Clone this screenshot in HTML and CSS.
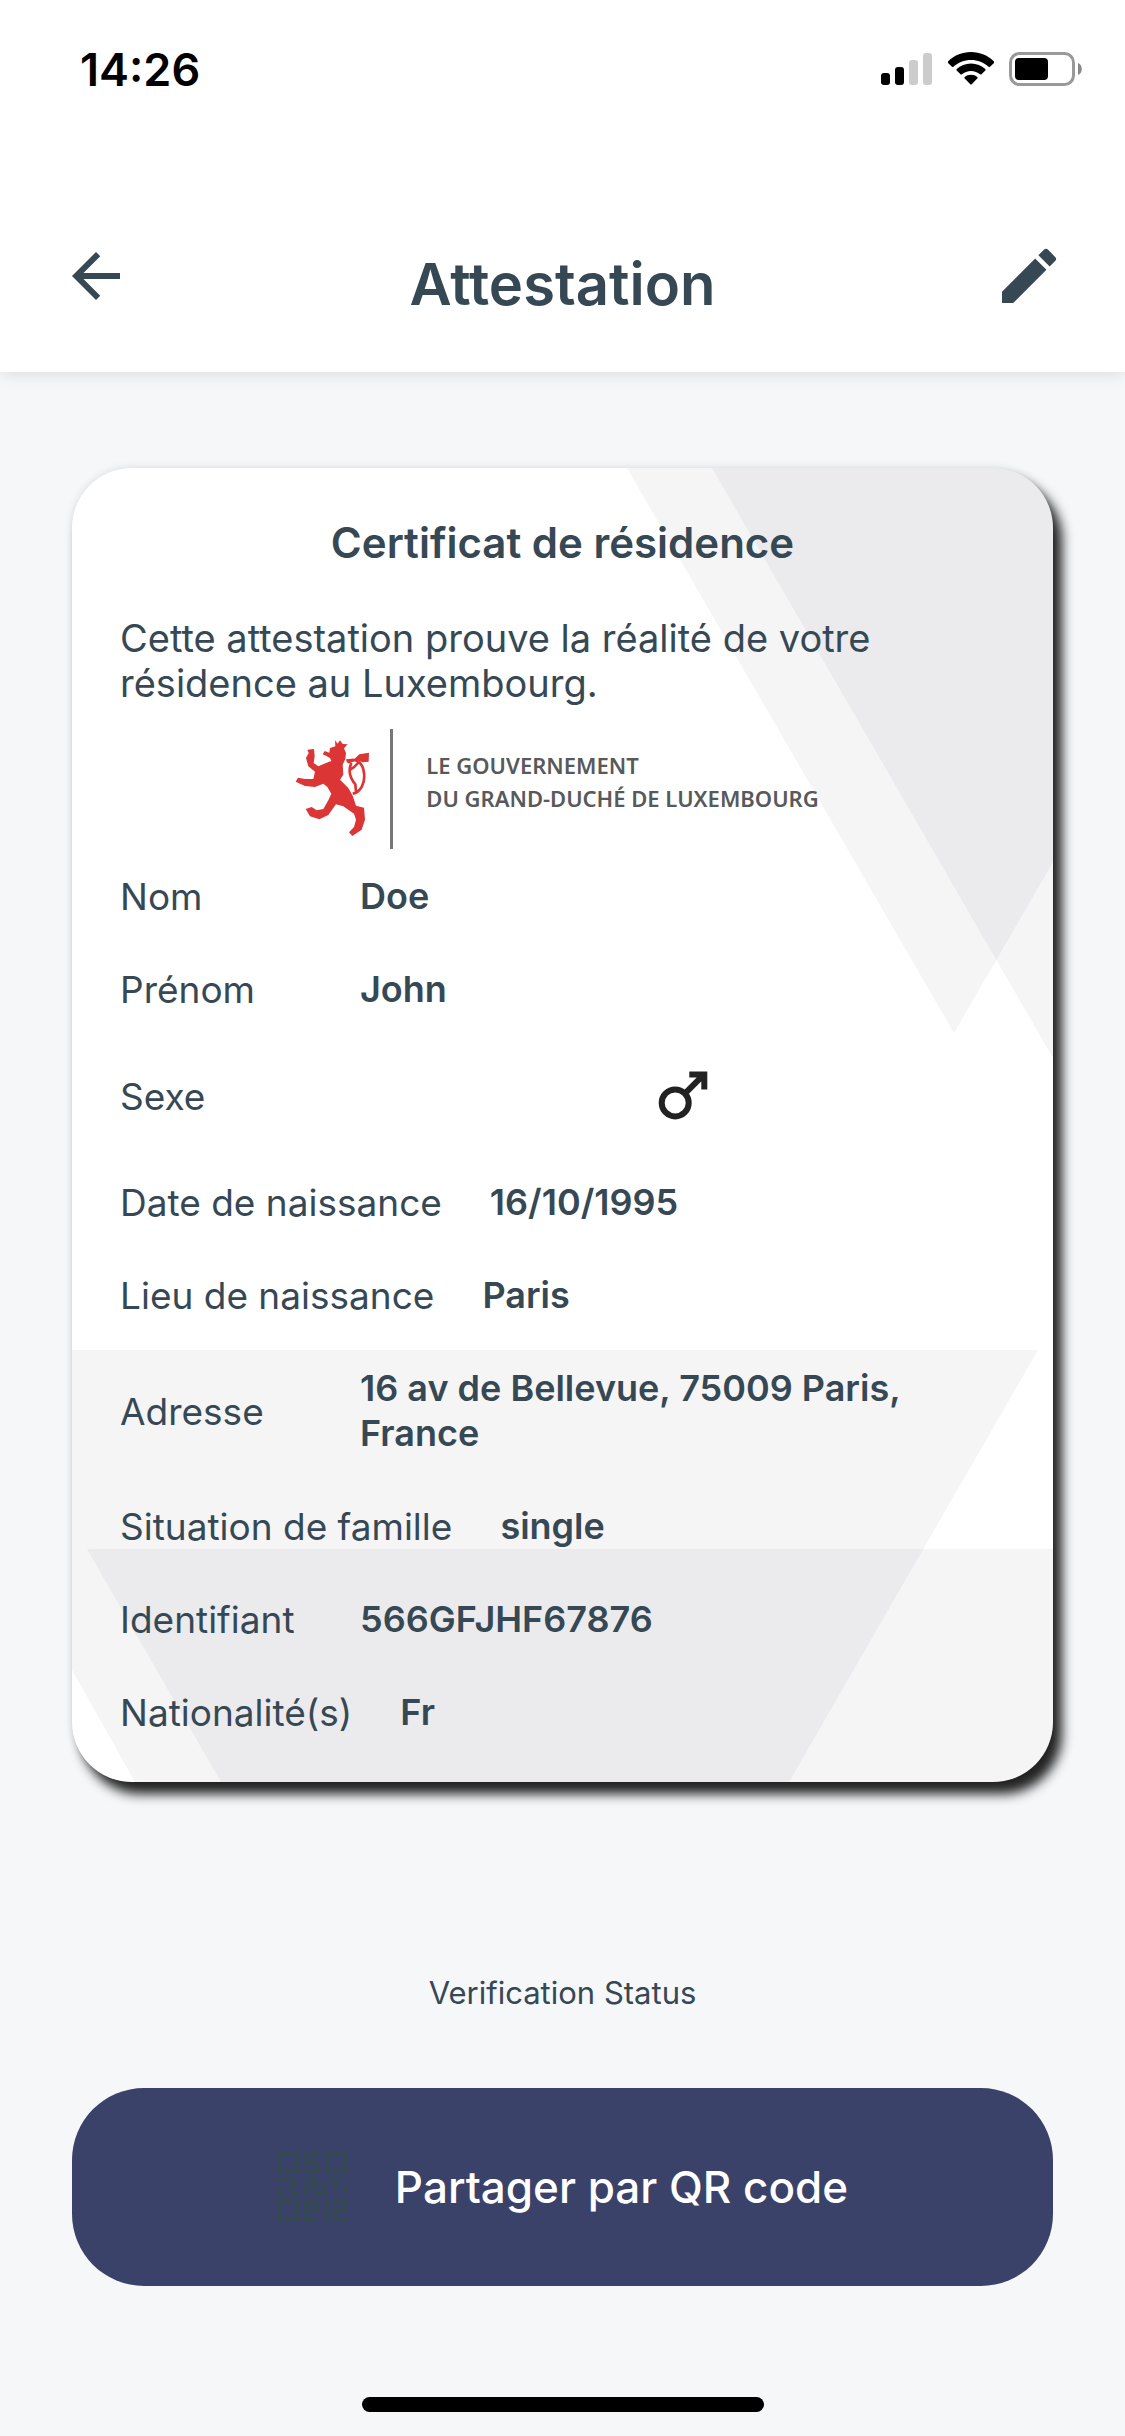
FILE: index.html
```html
<!DOCTYPE html>
<html lang="fr">
<head>
<meta charset="utf-8">
<meta name="viewport" content="width=device-width, initial-scale=1">
<title>Attestation</title>
<link rel="stylesheet" href="styles.css">
</head>
<body>
<div class="screen">
  <header class="topbar">
    <div class="status">
      <span class="clock">14:26</span>
      <div class="indicators">
        <svg width="52" height="33" viewBox="0 0 52 33" aria-hidden="true">
          <rect x="0" y="20" width="9" height="12" rx="3"/>
          <rect x="14" y="14" width="9" height="18" rx="3"/>
          <rect x="28" y="7" width="9" height="25" rx="3" fill="#ccc"/>
          <rect x="42" y="0" width="9" height="32" rx="3" fill="#ccc"/>
        </svg>
        <svg width="46" height="34" viewBox="0 0 46 34" aria-hidden="true">
          <path d="M23 0C14 0 6 3.500 0 9.500q-.6.700 0 1.400L4 14.800q.7.600 1.400 0C10 10.500 16.200 8 23 8s13 2.500 17.600 6.800q.7.600 1.400 0L46 10.900q.6-.7 0-1.400C40 3.500 32 0 23 0z"/>
          <path d="M23 11.500c-5.600 0-10.600 2.100-14.300 5.600q-.6.700 0 1.400L12.500 22.300q.7.600 1.400 0C16.300 20.300 19.500 19 23 19s6.700 1.300 9.100 3.300q.7.600 1.400 0L37.300 18.500q.6-.7 0-1.400C33.600 13.600 28.600 11.500 23 11.500z"/>
          <path d="M23 22.800c-2.500 0-4.600.8-6.300 2.300q-.7.700 0 1.400L22.300 32.300q.7.600 1.400 0L29.300 26.500q.7-.7 0-1.400C27.600 23.600 25.500 22.800 23 22.800z"/>
        </svg>
        <svg width="73" height="34" viewBox="0 0 73 34" aria-hidden="true">
          <rect x="1.500" y="1.500" width="63" height="31" rx="9" fill="none" stroke="#999" stroke-width="3"/>
          <rect x="6" y="6" width="33" height="22" rx="4"/>
          <path d="M69 11v12c5-1.500 5-10.500 0-12z" fill="#888"/>
        </svg>
      </div>
    </div>
    <nav class="nav">
      <button class="icon-button" type="button" aria-label="Retour">
        <svg viewBox="0 0 24 24" aria-hidden="true"><path d="M20 11H7.830l5.590-5.590L12 4l-8 8 8 8 1.410-1.410L7.830 13H20v-2z"/></svg>
      </button>
      <h1 class="title">Attestation</h1>
      <button class="icon-button" type="button" aria-label="Modifier">
        <svg viewBox="0 0 24 24" aria-hidden="true"><path d="M3 17.250V21h3.750L17.810 9.940l-3.750-3.750L3 17.250zM20.710 7.040a1 1 0 0 0 0-1.410l-2.340-2.340a1 1 0 0 0-1.410 0l-1.830 1.830 3.750 3.750 1.830-1.830z"/></svg>
      </button>
    </nav>
  </header>

  <main class="content">
    <section class="card">
      <svg class="card-art" viewBox="0 0 981 1314" preserveAspectRatio="none" aria-hidden="true">
        <path d="M555 0L882 565L981 394V0z"/>
        <path d="M640 0L981 590V0z"/>
        <path d="M0 882H966L717 1314H63L0 1202z"/>
        <path d="M15 1081H981V1314H149z"/>
      </svg>
      <h2 class="card-title">Certificat de résidence</h2>
      <p class="card-text">Cette attestation prouve la réalité de votre<br>résidence au Luxembourg.</p>
      <div class="issuer">
        <svg class="lion" viewBox="36 40 240 321" aria-hidden="true">
          <path d="M165 62L173 72L180 62L188 73L203 74L192 86L198 100L196 118L188 135L190 165L180 180L205 205L218 228L228 258L252 264L255 300L245 330L217 349L207 338L222 322L228 300L222 282L190 260L168 254L155 272L145 286L118 299L90 290L77 268L95 262L110 272L130 268L145 242L154 222L142 202L130 192L105 202L75 199L47 186L54 174L75 178L100 178L105 156L85 140L78 115L86 100L82 90L102 88L104 110L101 130L115 140L138 130L154 124L150 115L138 108L128 104L134 94L148 99L150 85L166 80z"/>
          <path d="M200 126C225 112 248 126 252 160C256 190 242 218 218 222M214 130C202 158 212 178 226 194L228 216M234 130C222 145 214 148 210 150" fill="none" stroke="#dc3535" stroke-width="8"/>
          <path d="M198 118L222 119L238 104L267 99L266 126L248 128L230 122L206 132z"/>
        </svg>
        <div class="issuer-name">LE GOUVERNEMENT<br>DU GRAND-DUCHÉ DE LUXEMBOURG</div>
      </div>
      <dl class="fields">
        <div class="field"><dt>Nom</dt><dd>Doe</dd></div>
        <div class="field"><dt>Prénom</dt><dd>John</dd></div>
        <div class="field"><dt>Sexe</dt><dd class="symbol">
          <svg viewBox="0 0 24 24" role="img" aria-label="Masculin"><circle cx="9.400" cy="14.300" r="4.500"/><path d="M12.600 11.200L18.600 5.200M14.100 4.800H19.100V9.800"/></svg>
        </dd></div>
        <div class="field"><dt>Date de naissance</dt><dd>16/10/1995</dd></div>
        <div class="field"><dt>Lieu de naissance</dt><dd>Paris</dd></div>
        <div class="field"><dt>Adresse</dt><dd>16 av de Bellevue, 75009 Paris,<br>France</dd></div>
        <div class="field"><dt>Situation de famille</dt><dd>single</dd></div>
        <div class="field"><dt>Identifiant</dt><dd>566GFJHF67876</dd></div>
        <div class="field"><dt>Nationalité(s)</dt><dd>Fr</dd></div>
      </dl>
    </section>
    <p class="verification">Verification Status</p>
    <button class="share" type="button">
      <svg class="qr" viewBox="0 0 70 70" aria-hidden="true">
        <path d="M2 2h18v18H2zM50 2h18v18H50zM2 50h18v18H2z"/>
        <path d="M44 2H35M28 0v11h13v9H26M35 2v9M0 28h18M20 30l-8 8M2 34v9h6M14 41h8M26 28h13v7H28v8M36 41h4M46 30v11M40 41h11M53 28h5v10M64 26v4M68 34v8M28 48v20h13M35 48v10h6V48M50 48v21M57 50h11v8H58v10h12"/>
      </svg>
      <span>Partager par QR code</span>
    </button>
  </main>
  <div class="home-indicator"></div>
</div>
</body>
</html>
```

FILE: styles.css
```css
* { box-sizing: border-box; }

body {
  margin: 0;
  background: #f5f7f9;
  color: #374855;
  font-family: Inter, "Liberation Sans", sans-serif;
}

h1, h2, p, dl, dd { margin: 0; }

button {
  border: 0;
  font: inherit;
  cursor: pointer;
}

.screen {
  display: flex;
  flex-direction: column;
  min-height: 100vh;
}

.topbar {
  background: #fff;
  padding-bottom: 60px;
  box-shadow: 0 3px 15px rgba(0, 0, 0, .1);
}

.status {
  display: flex;
  justify-content: space-between;
  align-items: center;
  height: 138px;
  padding: 0 43px 0 80px;
  color: #000;
}

.clock {
  font-size: 45px;
  font-weight: 600;
}

.indicators {
  display: flex;
  align-items: center;
  gap: 15px;
}

.nav {
  display: flex;
  justify-content: space-between;
  align-items: center;
  padding: 102px 60px 0;
}

.icon-button {
  width: 72px;
  height: 72px;
  padding: 0;
  background: none;
}

.icon-button svg {
  display: block;
  fill: #374855;
}

.title {
  padding-top: 16px;
  font-size: 58px;
  font-weight: 600;
  line-height: 56px;
}

.content {
  display: flex;
  flex-direction: column;
  padding: 96px 72px 0;
}

.card {
  position: relative;
  padding: 48px 48px 24px;
  border-radius: 60px;
  background: #fff;
  box-shadow: 9px 12px 12px #222, 0 0 8px rgba(0, 0, 0, .12);
}

.card-art {
  position: absolute;
  inset: 0;
  width: 100%;
  height: 100%;
  border-radius: 60px;
  fill: rgba(35, 35, 60, .048);
}

.card > :not(.card-art) { position: relative; }

.card-title {
  font-size: 42px;
  font-weight: 600;
  line-height: 54px;
  text-align: center;
}

.card-text {
  margin-top: 46px;
  font-size: 38px;
  line-height: 45px;
}

.issuer {
  display: flex;
  justify-content: center;
  height: 120px;
  margin-top: 23px;
  padding-right: 14px;
}

.lion {
  width: 80px;
  height: 107px;
  margin: 4px 18px 0 0;
  fill: #dc3535;
}

.issuer-name {
  padding: 20px 0 0 33px;
  border-left: 3px solid #777;
  color: #58595b;
  font-family: "Noto Sans", sans-serif;
  font-size: 22px;
  font-weight: 600;
  line-height: 33px;
}

.field {
  display: flex;
  align-items: center;
  gap: 48px;
  padding: 25px 0 23px;
  font-size: 36px;
  line-height: 45px;
}

.field dt {
  min-width: 192px;
  font-size: 37px;
}

.field dd {
  flex: 1;
  font-weight: 600;
}

.symbol svg {
  display: block;
  width: 72px;
  margin: 0 auto;
  fill: none;
  stroke: #222;
  stroke-width: 2;
}

.verification {
  margin-top: 193px;
  font-size: 31px;
  line-height: 36px;
  text-align: center;
}

.share {
  display: flex;
  justify-content: center;
  align-items: center;
  gap: 48px;
  height: 198px;
  margin-top: 77px;
  border-radius: 72px;
  background: #3a4269;
  color: #fff;
  font-size: 44px;
  font-weight: 500;
}

.qr {
  width: 70px;
  height: 70px;
  fill: none;
  stroke: #374855;
  stroke-width: 4;
}

.home-indicator {
  width: 402px;
  height: 15px;
  margin: auto auto 24px;
  border-radius: 8px;
  background: #000;
}
```
